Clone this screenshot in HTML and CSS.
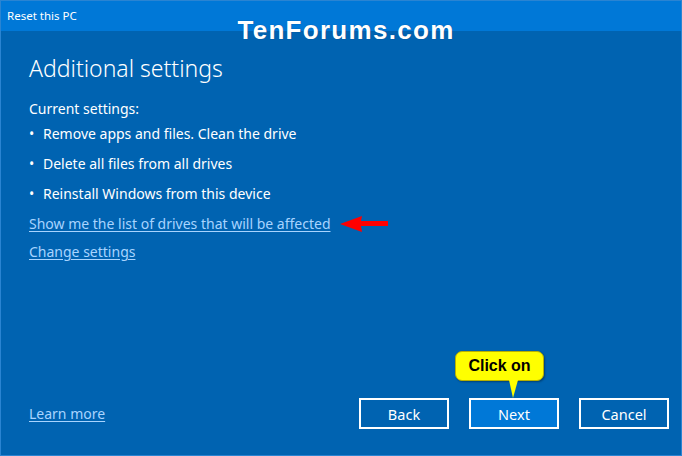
FILE: index.html
```html
<!DOCTYPE html>
<html lang="en">
<head>
    <meta charset="UTF-8">
    <meta name="viewport" content="width=device-width, initial-scale=1.0">
    <title>Reset this PC</title>
    <link rel="stylesheet" href="styles.css">
</head>
<body>
    <div class="window">
        <div class="titlebar">Reset this PC</div>
        <div class="watermark">TenForums.com</div>

        <div class="content">
            <h1 class="heading">Additional settings</h1>
            <div class="line line-label">Current settings:</div>
            <ul class="settings">
                <li>Remove apps and files. Clean the drive</li>
                <li>Delete all files from all drives</li>
                <li>Reinstall Windows from this device</li>
            </ul>
            <div class="line">
                <a href="#" class="link">Show me the list of drives that will be affected</a>
                <svg class="arrow" width="50" height="18" viewBox="0 0 50 18">
                    <path d="M1 9 L23 1 L22 6 L49 6 L49 11 L22 11 L23 17 Z" fill="#ff0000"/>
                </svg>
            </div>
            <div class="line">
                <a href="#" class="link">Change settings</a>
            </div>
        </div>

        <div class="footer">
            <a href="#" class="link">Learn more</a>
            <div class="buttons">
                <button class="btn">Back</button>
                <div class="btn-wrap">
                    <div class="callout">Click on</div>
                    <button class="btn btn-primary">Next</button>
                </div>
                <button class="btn">Cancel</button>
            </div>
        </div>
    </div>
</body>
</html>
```
FILE: styles.css
```css
html, body {
    margin: 0;
    padding: 0;
}

body {
    width: 682px;
    height: 456px;
    overflow: hidden;
    font-family: "Noto Sans", "Open Sans", sans-serif;
    color: #fff;
}

.window {
    position: relative;
    box-sizing: border-box;
    width: 682px;
    height: 456px;
    background-color: #0063b1;
    border: 1px solid #2a84d2;
    display: flex;
    flex-direction: column;
}

.titlebar {
    height: 30px;
    background-color: #0078d7;
    font-size: 11.5px;
    line-height: 30px;
    padding-left: 6px;
}

.watermark {
    position: absolute;
    top: 14px;
    left: 10px;
    right: 0;
    text-align: center;
    font-family: "Liberation Sans", Arial, sans-serif;
    font-weight: bold;
    font-size: 26px;
    letter-spacing: 1.3px;
    color: #fff;
    text-shadow: 0 0 1px rgba(0, 40, 90, 0.6);
}

.content {
    flex: 1;
    padding: 20px 28px 0;
}

.heading {
    margin: 0 0 14px;
    font-weight: 300;
    font-size: 23px;
    line-height: 34px;
}

.line {
    display: flex;
    align-items: center;
    font-size: 14px;
    line-height: 20px;
    margin-bottom: 8px;
}

.line-label {
    margin-bottom: 5px;
}

.settings {
    list-style: none;
    margin: 0;
    padding: 0;
    font-size: 14px;
    line-height: 20px;
}

.settings li {
    margin-bottom: 10px;
}

.settings li::before {
    content: "\2022";
    display: inline-block;
    width: 14px;
}

.link {
    color: #a8d4ff;
    text-decoration: underline;
    text-underline-offset: 2px;
}

.arrow {
    margin-left: 8px;
}

.footer {
    display: flex;
    align-items: center;
    justify-content: space-between;
    padding: 0 12px 26px 28px;
    font-size: 14px;
}

.buttons {
    display: flex;
    gap: 20px;
}

.btn-wrap {
    position: relative;
}

.btn {
    width: 90px;
    height: 31px;
    box-sizing: border-box;
    background-color: #0063b1;
    border: 2px solid #fff;
    color: #fff;
    font-family: "Noto Sans", "Open Sans", sans-serif;
    font-size: 14.5px;
    padding: 0;
}

.btn-primary {
    background-color: #0078d7;
}

.callout {
    position: absolute;
    left: -14px;
    bottom: 48px;
    width: 89px;
    height: 30px;
    box-sizing: border-box;
    background-color: #ffff00;
    border: 1px solid #b8b000;
    border-radius: 7px;
    color: #000;
    font-family: "Liberation Sans", Arial, sans-serif;
    font-weight: bold;
    font-size: 16px;
    line-height: 28px;
    text-align: center;
    box-shadow: 1px 1px 2px rgba(0, 0, 0, 0.35);
}

.callout::after {
    content: "";
    position: absolute;
    left: 53px;
    top: 28px;
    border-left: 4px solid transparent;
    border-right: 5px solid transparent;
    border-top: 18px solid #ffff00;
}
```
